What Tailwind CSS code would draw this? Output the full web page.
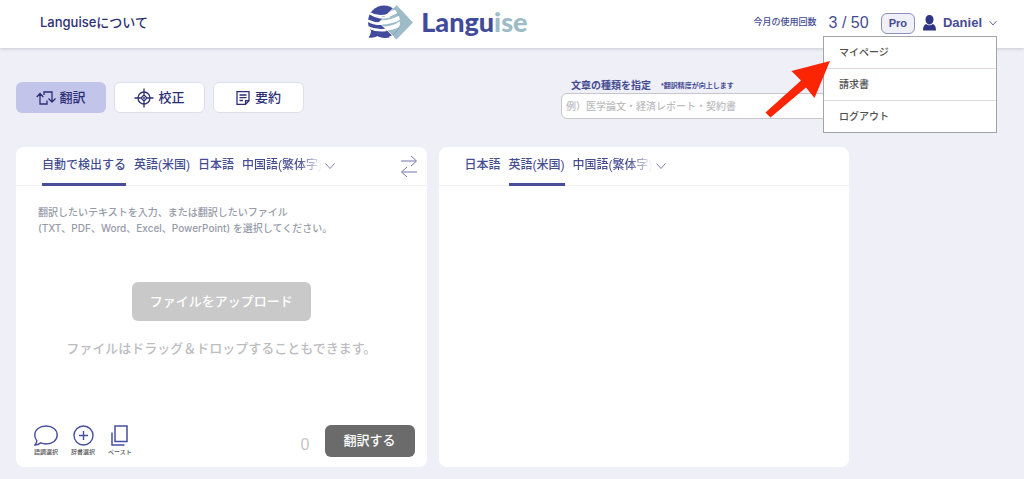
<!DOCTYPE html>
<html lang="ja">
<head>
<meta charset="utf-8">
<meta name="viewport" content="width=device-width, initial-scale=1">
<title>Languise</title>
<script src="https://cdn.jsdelivr.net/npm/@tailwindcss/browser@4"></script>
</head>
<body class="flex min-h-screen flex-col bg-[#eeeff7] font-['Liberation_Sans','Noto_Sans_CJK_JP',sans-serif] font-medium text-[#464c92]">
<header class="relative z-10 grid h-12 grid-cols-[32%_auto_1fr] items-center bg-white pr-[27px] pl-10 shadow-[0_1px_3px_#c9cad4]">
  <a href="#" class="pb-1 font-['Inter','Noto_Sans_CJK_JP',sans-serif] text-[13px] leading-5 text-[#2c2f75]">Languiseについて</a>
  <a href="#" class="-ml-[8px] flex items-center gap-2 pb-1 pl-[29px]" aria-label="Languise">
    <svg class="h-9 w-[46px]" viewBox="0 0 46 36" fill="none">
      <defs>
        <clipPath id="globe"><circle cx="17" cy="17.500" r="16"/></clipPath>
        <clipPath id="gem"><path d="M29.500 1 12 18.500 29.500 35.500 46 18.500Z"/></clipPath>
      </defs>
      <path d="M29.500 1 12 18.500 29.500 35.500 46 18.500Z" fill="#9dbcc7"/>
      <path d="M4 24c.5 4-.5 7-2.500 9.500 3.500.6 6.500 0 9-1.500 3 1.500 7 2.500 12 1.500L17 20Z" fill="#414a9b"/>
      <g clip-path="url(#globe)">
        <path d="M0 0h36v36H0Z" fill="#414a9b"/>
        <path d="M2 8.500c7 4.500 17 5 28-2.500M-1 15.500c9 5.500 22 5 34-2.500M0 22.500c9 5 22 5 34-2.500" stroke="#fff" stroke-width="1.800"/>
        <g clip-path="url(#gem)">
          <path d="M0 0h36v36H0Z" fill="#9dbcc7"/>
          <path d="M14 11.500C20 11.500 26 9.500 31 6M10 18c8 1 16-.5 24-5M12 24.300c8 1 15-.5 22-5" stroke="#fff" stroke-width="4.300"/>
        </g>
      </g>
      <path d="M29.500 1 12 18.500 27 33" stroke="#fff" stroke-width=".8"/>
      <path d="M3 10c6 4 14 5 20 2.500M1 17c5 3.200 10 3.500 14 3.300M2 24c5 2.500 11 3.200 17 2.500" stroke="#fff" stroke-width="1.500"/>
    </svg>
    <span class="font-['Lato',sans-serif] text-[27px] leading-8 font-black text-[#414a9b]">Langu<span class="text-[#9dbcc7]">ise</span></span>
  </a>
  <div class="relative flex items-center justify-end pb-[2px]">
    <span class="mr-3 text-[9px]">今月の使用回数</span>
    <span class="mr-3 text-[16px] leading-5">3 / 50</span>
    <span class="mr-2 rounded-md border border-[#8b8fbb] bg-[#eff0f8] px-[7px] text-[11px] leading-[19px] font-bold">Pro</span>
    <button type="button" class="flex items-center text-[13px] leading-5 font-bold" aria-expanded="true">
      <svg class="mr-[7px] h-4 w-[13px]" viewBox="0 0 13 16" fill="#2e3585"><path d="M6.500 0C9 0 10.500 2 10.500 4.500S9 9.500 6.500 9.500 2.500 7 2.500 4.500 4 0 6.500 0ZM0 15.500C0 12 1 9.800 3.200 9c1.800 1.700 4.800 1.700 6.600 0 2.200.8 3.200 3 3.200 6.500Z"/></svg>
      Daniel
      <svg class="ml-[7px] h-2 w-2" viewBox="0 0 8 8" fill="none" stroke="#6b70a8"><path d="m.5 2 3.500 4 3.500-4"/></svg>
    </button>
    <nav class="absolute top-[23px] right-0 w-[174px] border border-[#a3a3a8] bg-white text-[10px] text-[#505050]">
      <a href="#" class="block border-b border-[#e3dbe0] px-[15px] leading-[31px]">マイページ</a>
      <a href="#" class="block border-b border-[#dcdce0] px-[15px] leading-[31px]">請求書</a>
      <a href="#" class="block px-[15px] leading-[31px]">ログアウト</a>
    </nav>
    <svg class="absolute top-[47px] right-[166px] h-[58px] w-[66px]" viewBox="0 0 66 58" fill="#fb2503"><path d="M65 1 26.500 11 36 20.500.5 52.500l5 5L41 27.500l8.500 10.500Z"/></svg>
  </div>
</header>

<main class="flex flex-1 flex-col pt-[34px] pr-[175px] pb-3 pl-4">
  <div class="mb-[28px] flex items-start justify-between">
    <div class="flex gap-2 text-[13px] text-[#2c2f75]">
      <button type="button" class="flex h-[31px] w-[90px] items-center justify-center gap-[3px] rounded-md bg-[#c3c4ea]">
        <svg class="h-[14px] w-5" viewBox="0 0 20 14" fill="none" stroke="currentColor" stroke-width="1.300"><path d="M.7 6 4 2.500 7.300 6M4 3v10h7V9.500M8 4V1h8v9.500M12.500 7.500 16 11l3.500-3.500"/></svg>
        翻訳
      </button>
      <button type="button" class="flex h-[31px] w-[91px] items-center justify-center gap-1 rounded-md border border-[#dddfe8] bg-white">
        <svg class="h-5 w-5" viewBox="0 0 20 20" fill="none" stroke="currentColor" stroke-width="1.300"><circle cx="10" cy="10" r="6"/><path d="M10 .5v6M10 13.500v6M.5 10h6M13.500 10h6M10 7l3 3-3 3-3-3Z"/><circle cx="10" cy="10" r="1" fill="currentColor" stroke="none"/></svg>
        校正
      </button>
      <button type="button" class="flex h-[31px] w-[91px] items-center justify-center gap-[5px] rounded-md border border-[#dddfe8] bg-white">
        <svg class="h-[14px] w-[14px]" viewBox="0 0 14 14" fill="none" stroke="currentColor" stroke-width="1.300"><path d="M1 .7h12v9L9.500 13.300H1ZM13 9.700H9.500v3.600M3.500 4h7M3.500 6.700h7M3.500 9.500H7"/></svg>
        要約
      </button>
    </div>
    <div class="-mt-1 w-[288px]">
      <label for="doctype" class="flex items-center gap-[10px] pl-[10px] text-[10px] leading-[15px] font-bold">文章の種類を指定 <small class="text-[7px]">*翻訳精度が向上します</small></label>
      <input id="doctype" type="text" placeholder="例）医学論文・経済レポート・契約書" class="block h-[26px] w-full rounded-md border border-[#c6c6cb] bg-white px-1 text-[10px] placeholder:text-[#bcbcc0]">
    </div>
  </div>

  <div class="grid flex-1 grid-cols-2 gap-3">
    <section class="flex flex-col rounded-lg bg-white">
      <div class="flex h-[39px] items-stretch border-b border-[#f0f0f4] pr-[10px] pl-[26px] text-[12px]">
        <div class="flex gap-2 whitespace-nowrap">
          <button type="button" class="-mb-px border-b-[3px] border-[#474d96]">自動で検出する</button>
          <button type="button" class="-mb-px border-b-[3px] border-transparent">英語(米国)</button>
          <button type="button" class="-mb-px border-b-[3px] border-transparent">日本語</button>
          <button type="button" class="-mb-px border-b-[3px] border-transparent bg-linear-to-r from-[#464c92] from-70% to-transparent bg-clip-text text-transparent">中国語(繁体字)</button>
        </div>
        <button type="button" class="ml-[3px]" aria-label="他の言語"><svg class="h-[6px] w-[10px]" viewBox="0 0 10 6" fill="none" stroke="#7a7fae"><path d="m.5.5 4.500 5 4.500-5"/></svg></button>
        <button type="button" class="ml-auto" aria-label="言語を入れ替え"><svg class="h-[22px] w-4" viewBox="0 0 16 22" fill="none" stroke="#7277ac"><path d="M0 6h15M10 1l5.500 5L10 11M16 17H1M6 12 .5 17 6 22"/></svg></button>
      </div>
      <div class="flex flex-1 flex-col px-[22px] pt-[18px] pb-[10px]">
        <p class="font-['Inter','Noto_Sans_CJK_JP',sans-serif] text-[10px] leading-4 text-[#979ba9]">翻訳したいテキストを入力、または翻訳したいファイル<br>(TXT、PDF、Word、Excel、PowerPoint) を選択してください。</p>
        <div class="mt-[46px] flex flex-col items-center">
          <button type="button" class="h-[39px] w-[179px] rounded-md bg-[#c9c9c9] text-[13px] text-white">ファイルをアップロード</button>
          <p class="mt-[18px] text-[13px] leading-5 whitespace-nowrap text-[#bdbdbf]">ファイルはドラッグ＆ドロップすることもできます。</p>
        </div>
      </div>
      <div class="flex items-end pr-3 pb-[10px] pl-[18px]">
        <div class="flex gap-[13px] text-[6px] leading-[9px] text-[#555]">
          <button type="button" class="flex flex-col items-center gap-[2px]"><svg class="h-[21px] w-6" viewBox="0 0 24 21" fill="none" stroke="#474da0" stroke-width="1.400"><path d="M12 1c6.500 0 11.200 3.800 11.200 9S18.500 19 12 19c-2 0-3.800-.4-5.400-1.100C5 19.300 3 20 1 20c1.300-1.500 1.900-3 1.700-4.600C1.400 13.900.8 12 .8 10 .8 4.800 5.500 1 12 1Z"/></svg>語調選択</button>
          <button type="button" class="flex flex-col items-center gap-[2px]"><svg class="h-[21px] w-[21px]" viewBox="0 0 21 21" fill="none" stroke="#474da0" stroke-width="1.400"><circle cx="10.500" cy="10.500" r="9.500"/><path d="M10.500 6v9M6 10.500h9"/></svg>辞書選択</button>
          <button type="button" class="flex flex-col items-center gap-[2px]"><svg class="h-[21px] w-[17px]" viewBox="0 0 17 21" fill="none" stroke="#474da0" stroke-width="1.500"><path d="M4 1h12v15.500H4ZM1 7.500V20h12.500"/></svg>ペースト</button>
        </div>
        <span class="mr-[15px] ml-auto pb-[2px] text-[16px] leading-5 text-[#c6c6c8]">0</span>
        <button type="button" class="h-8 w-[90px] rounded-md bg-[#6b6b6b] text-[13px] text-white">翻訳する</button>
      </div>
    </section>

    <section class="rounded-lg bg-white">
      <div class="flex h-[39px] items-stretch border-b border-[#f0f0f4] pl-[26px] text-[12px]">
        <div class="flex gap-2 whitespace-nowrap">
          <button type="button" class="-mb-px border-b-[3px] border-transparent">日本語</button>
          <button type="button" class="-mb-px border-b-[3px] border-[#474d96]">英語(米国)</button>
          <button type="button" class="-mb-px border-b-[3px] border-transparent bg-linear-to-r from-[#464c92] from-70% to-transparent bg-clip-text text-transparent">中国語(繁体字)</button>
        </div>
        <button type="button" class="ml-[3px]" aria-label="他の言語"><svg class="h-[6px] w-[10px]" viewBox="0 0 10 6" fill="none" stroke="#7a7fae"><path d="m.5.5 4.500 5 4.500-5"/></svg></button>
      </div>
    </section>
  </div>
</main>
</body>
</html>
